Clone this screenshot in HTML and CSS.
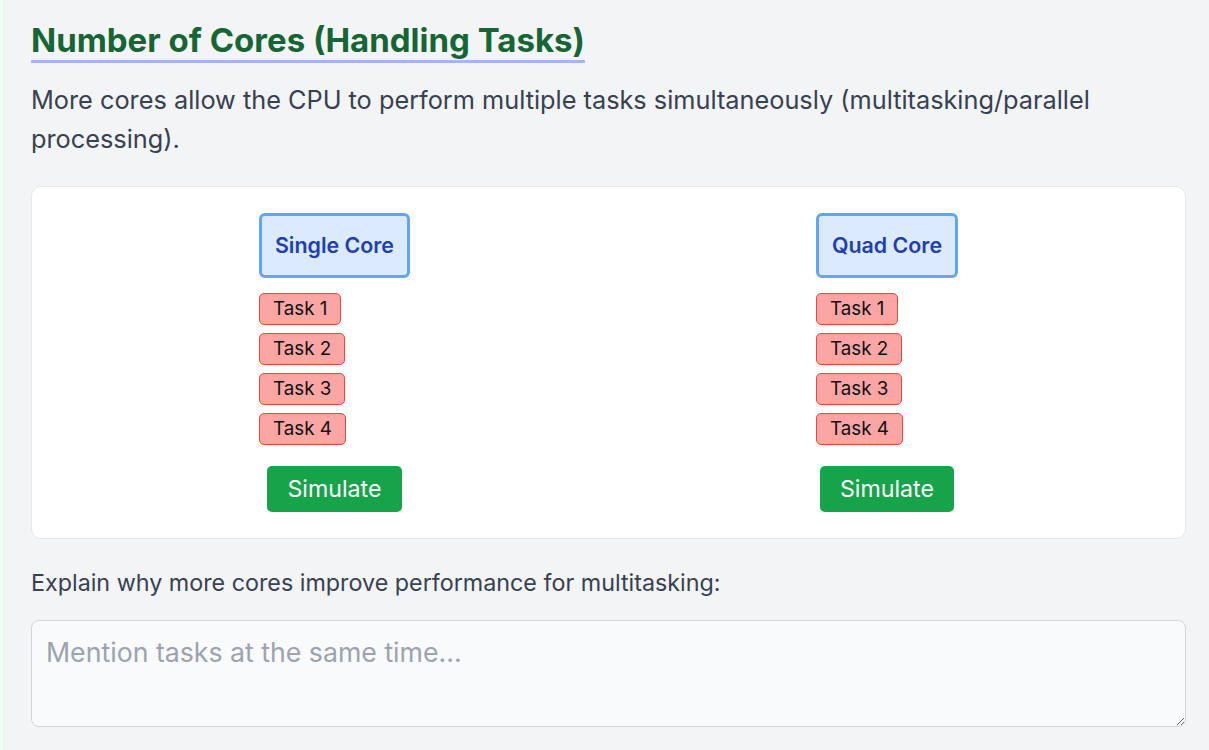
FILE: index.html
```html
<!DOCTYPE html>
<html lang="en">
<head>
<meta charset="utf-8">
<title>Number of Cores</title>
<link rel="stylesheet" href="styles.css">
</head>
<body>
<div class="frame">
  <section class="section">
    <h2 class="title">Number of Cores (Handling Tasks)</h2>
    <p class="lead">More cores allow the CPU to perform multiple tasks simultaneously (multitasking/parallel processing).</p>

    <div class="card">
      <div class="core-col">
        <div class="core-box">Single Core</div>
        <div class="tasks">
          <span class="task">Task 1</span>
          <span class="task">Task 2</span>
          <span class="task">Task 3</span>
          <span class="task">Task 4</span>
        </div>
        <button class="sim-btn">Simulate</button>
      </div>
      <div class="core-col">
        <div class="core-box">Quad Core</div>
        <div class="tasks">
          <span class="task">Task 1</span>
          <span class="task">Task 2</span>
          <span class="task">Task 3</span>
          <span class="task">Task 4</span>
        </div>
        <button class="sim-btn">Simulate</button>
      </div>
    </div>

    <label class="q-label" for="answer">Explain why more cores improve performance for multitasking:</label>
    <textarea id="answer" class="answer" placeholder="Mention tasks at the same time..."></textarea>
  </section>
</div>
</body>
</html>
```

FILE: styles.css
```css
* { box-sizing: border-box; }

html, body {
  margin: 0;
  padding: 0;
  height: 100%;
  overflow: hidden;
}

body {
  font-family: Inter, "Noto Sans", sans-serif;
  background: #f0fdf4;
}

.frame {
  padding-left: 3px;
  min-height: 100%;
  background: #f0fdf4;
}

.section {
  min-height: 750px;
  background: #f3f4f6;
  border-left: 1px solid #dcfce7;
  padding: 20px 23px 20px 27px;
}

.title {
  display: inline-block;
  margin: 0;
  font-size: 33px;
  line-height: 40px;
  font-weight: 700;
  color: #166534;
  border-bottom: 3px solid #a5b4fc;
}

.lead {
  margin: 17px 0 28px;
  font-size: 25.3px;
  line-height: 39px;
  color: #374151;
}

.card {
  display: flex;
  justify-content: space-around;
  align-items: flex-start;
  background: #ffffff;
  border: 1px solid #e5e7eb;
  border-radius: 10px;
  padding: 26px 24px 26px;
}

.core-col {
  display: flex;
  flex-direction: column;
  align-items: flex-start;
}

.core-box {
  background: #dbeafe;
  border: 3px solid #60a5fa;
  border-radius: 6px;
  padding: 16px 13px;
  font-size: 21.4px;
  line-height: 27px;
  font-weight: 600;
  color: #1e40af;
}

.tasks {
  display: flex;
  flex-direction: column;
  align-items: flex-start;
  gap: 8px;
  margin-top: 15px;
}

.task {
  display: inline-block;
  background: #fca5a5;
  border: 1px solid #ef4444;
  border-radius: 5px;
  padding: 0 13px;
  font-size: 18.8px;
  line-height: 30px;
  color: #111111;
}

.sim-btn {
  align-self: center;
  margin-top: 21px;
  background: #16a34a;
  color: #ffffff;
  border: none;
  border-radius: 5px;
  padding: 0 20px;
  height: 46px;
  font-family: Inter, "Noto Sans", sans-serif;
  font-size: 23.2px;
  cursor: pointer;
}

.q-label {
  display: block;
  margin-top: 29px;
  font-size: 23.3px;
  line-height: 30px;
  color: #374151;
}

.answer {
  display: block;
  width: 100%;
  height: 107px;
  margin-top: 22px;
  background: #f9fafb;
  border: 1px solid #d1d5db;
  border-radius: 8px;
  padding: 14px 14px;
  font-family: Inter, "Noto Sans", sans-serif;
  font-size: 26.7px;
  line-height: 34px;
  color: #374151;
  resize: vertical;
}

.answer::placeholder {
  color: #9ca3af;
}
```
